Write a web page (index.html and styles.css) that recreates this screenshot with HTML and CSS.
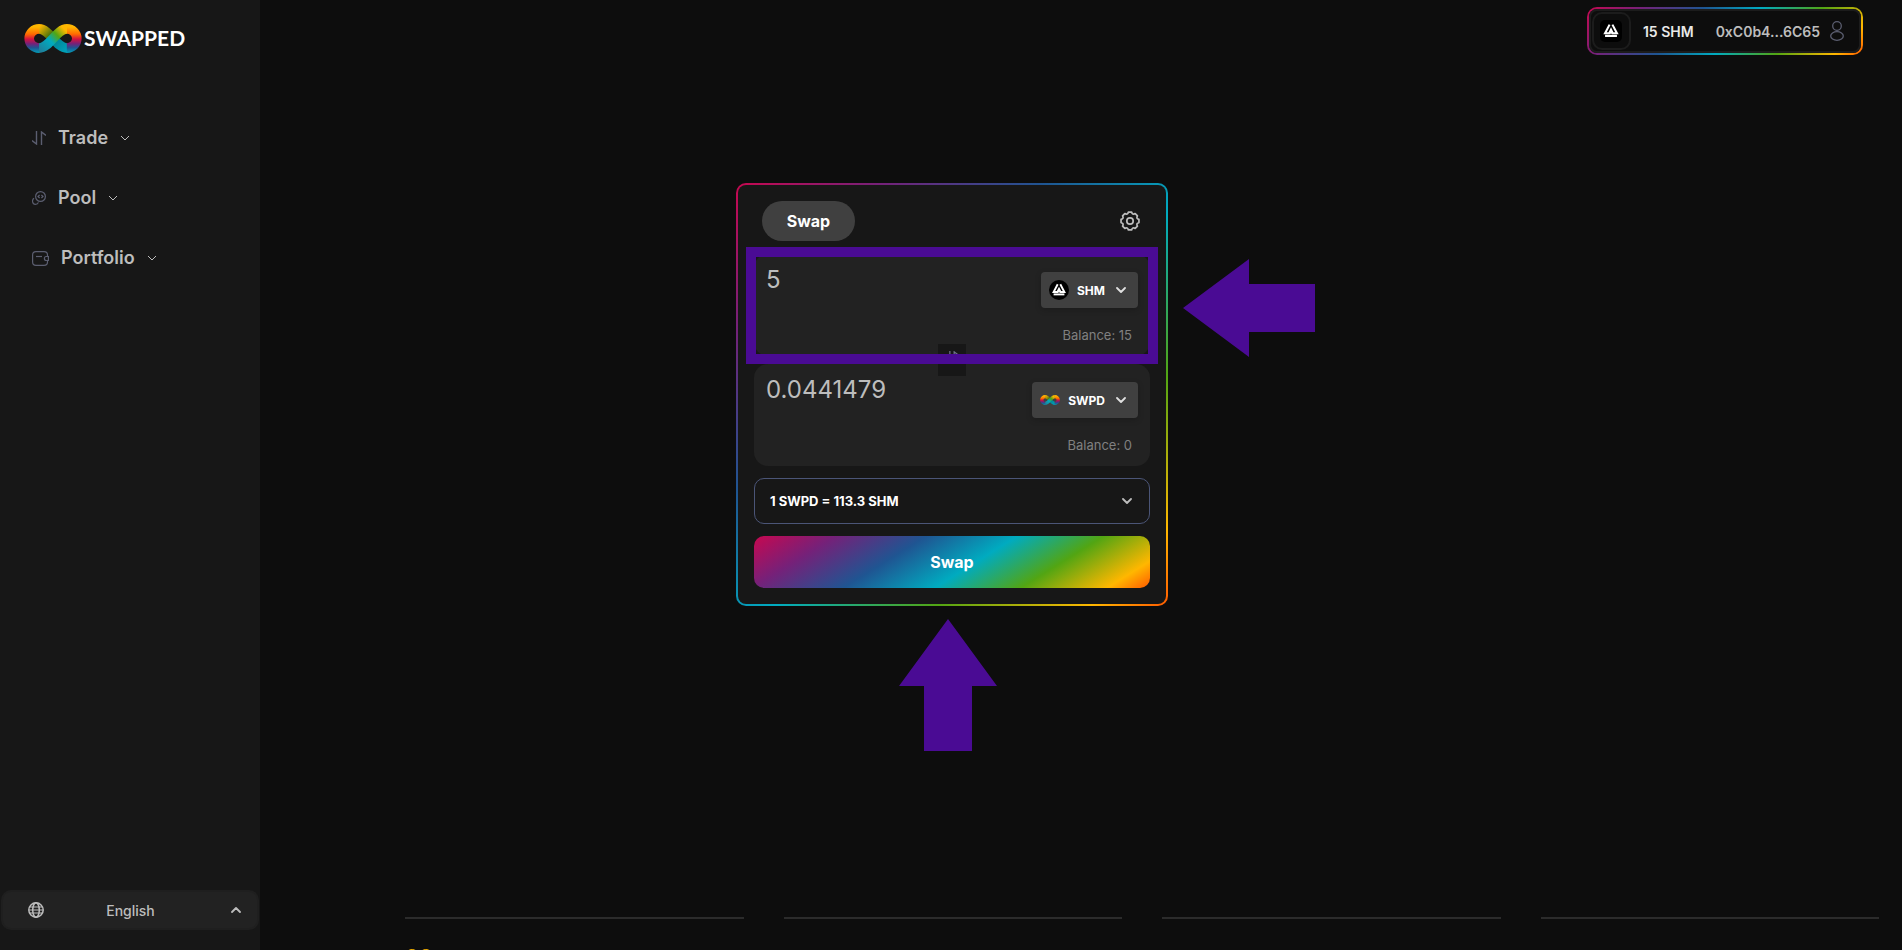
FILE: index.html
```html
<!DOCTYPE html>
<html lang="en">
<head>
  <meta charset="UTF-8" />
  <meta name="viewport" content="width=device-width, initial-scale=1.0" />
  <title>Swapped</title>
  <link rel="stylesheet" href="styles.css">
</head>
<body>
  <!-- shared symbols -->
  <svg class="sprite" aria-hidden="true">
    <defs>
      <linearGradient id="loop" gradientUnits="userSpaceOnUse" x1="0" y1="0" x2="0" y2="29">
        <stop offset="0.1" stop-color="#ffb700" />
        <stop offset="0.35" stop-color="#ff6a00" />
        <stop offset="0.52" stop-color="#d5123f" />
        <stop offset="0.68" stop-color="#752179" />
        <stop offset="0.82" stop-color="#1f5592" />
        <stop offset="1" stop-color="#00a0b8" />
      </linearGradient>
      <linearGradient id="band" gradientUnits="userSpaceOnUse" x1="42" y1="2" x2="16" y2="27">
        <stop offset="0.1" stop-color="#ffb700" />
        <stop offset="0.35" stop-color="#52a513" />
        <stop offset="0.6" stop-color="#00abc0" />
        <stop offset="1" stop-color="#1f7f9a" />
      </linearGradient>
      <linearGradient id="under" gradientUnits="userSpaceOnUse" x1="16" y1="2" x2="42" y2="27">
        <stop offset="0" stop-color="#ffb700" />
        <stop offset="0.4" stop-color="#3d6d0c" />
        <stop offset="0.65" stop-color="#00899b" />
        <stop offset="1" stop-color="#00a0b8" />
      </linearGradient>
      <symbol id="infinity" viewBox="0 0 58 29">
        <g fill="none" stroke-width="9.6">
          <path stroke="url(#under)" d="M15 4.9C26 4.9 32 24.1 43 24.1" />
          <path stroke="url(#loop)" d="M15.2 4.9A10 9.6 0 0 0 15.2 24.1" />
          <path stroke="url(#loop)" d="M42.8 4.9A10 9.6 0 0 1 42.8 24.1" />
          <path stroke="url(#band)" d="M15 24.1C26 24.1 32 4.9 43 4.9" />
        </g>
      </symbol>
      <symbol id="shm" viewBox="0 0 20 20">
        <rect width="20" height="20" rx="10" />
        <g fill="none" stroke="#fff" stroke-width="1.9">
          <path d="M8.7 4.2L4.6 12H8.4L10 8.8L11.6 12H15.4L11.3 4.2" />
          <path d="M4.6 14.4H15.4" />
          <path d="M10 10.6V12.6" />
        </g>
      </symbol>
      <symbol id="chevron" viewBox="0 0 10 6">
        <path d="M1 1L5 5L9 1" fill="none" stroke="currentColor" stroke-width="1.8" stroke-linejoin="round" stroke-linecap="round" />
      </symbol>
      <symbol id="chevron-thin" viewBox="0 0 10 6">
        <path d="M1 1L5 5L9 1" fill="none" stroke="currentColor" stroke-width="1" />
      </symbol>
      <symbol id="arrows" viewBox="0 0 14 14">
        <path d="M4.5 0V13L0 9.5M9.5 14V1L14 4.5" fill="none" stroke="currentColor" stroke-width="1.4" />
      </symbol>
    </defs>
  </svg>

  <div class="app">
    <aside class="sidebar">
      <a class="logo" href="#">
        <svg class="logo-mark"><use href="#infinity" /></svg>
        <span>SWAPPED</span>
      </a>

      <nav>
        <ul class="nav-menu">
          <li>
            <button type="button">
              <svg class="nav-icon" viewBox="0 0 14 14"><use href="#arrows" /></svg>
              Trade
              <svg class="nav-chevron"><use href="#chevron-thin" /></svg>
            </button>
          </li>
          <li>
            <button type="button">
              <svg class="nav-icon" viewBox="0 0 14 14">
                <g fill="none" stroke="currentColor" stroke-width="1.2">
                  <circle cx="8.5" cy="5.5" r="4.9" />
                  <path d="M2 7.2C-.4 9 .2 13.4 3.4 13.4C5 13.4 6 12.6 6.4 11.4" />
                  <path d="M7.6 4L6 5.5L7.6 7M9.4 4L11 5.5L9.4 7" />
                </g>
              </svg>
              Pool
              <svg class="nav-chevron"><use href="#chevron-thin" /></svg>
            </button>
          </li>
          <li>
            <button type="button">
              <svg class="nav-icon wide" viewBox="0 0 17 15">
                <g fill="none" stroke="currentColor" stroke-width="1.2">
                  <path d="M15.5 5V4C15.5 2 14 .6 12 .6H4C2 .6 .6 2 .6 4V11C.6 13 2 14.4 4 14.4H12C14 14.4 15.5 13 15.5 11V10" />
                  <path d="M16.4 5.5H14.2C11.8 5.5 11.8 9.5 14.2 9.5H16.4Z" />
                  <path d="M4 5.5H10" />
                </g>
              </svg>
              Portfolio
              <svg class="nav-chevron"><use href="#chevron-thin" /></svg>
            </button>
          </li>
        </ul>
      </nav>

      <button class="language" type="button">
        <svg class="globe" viewBox="0 0 16 16">
          <g fill="none" stroke="currentColor" stroke-width="1.5">
            <circle cx="8" cy="8" r="7.2" />
            <ellipse cx="8" cy="8" rx="3.3" ry="7.2" />
            <path d="M1 8H15M2 5H14M2 11H14" stroke-width="1.1" />
          </g>
        </svg>
        <span>English</span>
        <svg class="chevron up"><use href="#chevron" /></svg>
      </button>
    </aside>

    <main>
      <header class="topbar">
        <button class="wallet" type="button">
          <span class="wallet-token"><svg><use href="#shm" /></svg></span>
          <span class="wallet-balance">15 SHM</span>
          <span class="wallet-address">0xC0b4...6C65</span>
          <svg class="user" viewBox="0 0 14 20">
            <g fill="none" stroke="currentColor" stroke-width="1.3">
              <circle cx="7" cy="5" r="4.3" />
              <ellipse cx="7" cy="15" rx="6.3" ry="4.3" />
            </g>
          </svg>
        </button>
      </header>

      <section class="swap-area">
        <form class="swap-card">
          <div class="card-header">
            <button class="tab" type="button">Swap</button>
            <button class="settings" type="button" aria-label="Settings">
              <svg viewBox="0 0 20 20">
                <g fill="none" stroke="currentColor" stroke-width="1.7" stroke-linejoin="round">
                  <path d="M8.4 1.05H11.6Q12.4 4.2 15.2 2.55L17.45 4.8Q15.8 7.6 18.95 8.4V11.6Q15.8 12.4 17.45 15.2L15.2 17.45Q12.4 15.8 11.6 18.95H8.4Q7.6 15.8 4.8 17.45L2.55 15.2Q4.2 12.4 1.05 11.6V8.4Q4.2 7.6 2.55 4.8L4.8 2.55Q7.6 4.2 8.4 1.05Z" />
                  <circle cx="10" cy="10" r="3.2" />
                </g>
              </svg>
            </button>
          </div>

          <div class="panels">
            <div class="panel">
              <input type="text" value="5" aria-label="Amount to sell">
              <div class="panel-side">
                <button class="token" type="button">
                  <svg class="token-icon"><use href="#shm" /></svg>
                  SHM
                  <svg class="chevron"><use href="#chevron" /></svg>
                </button>
                <p>Balance: 15</p>
              </div>
              <button class="switch" type="button" aria-label="Switch tokens">
                <svg viewBox="0 0 14 14"><use href="#arrows" /></svg>
              </button>
              <div class="highlight"></div>
            </div>

            <div class="panel">
              <input type="text" value="0.0441479" aria-label="Amount to buy">
              <div class="panel-side">
                <button class="token" type="button">
                  <svg class="token-icon"><use href="#infinity" /></svg>
                  SWPD
                  <svg class="chevron"><use href="#chevron" /></svg>
                </button>
                <p>Balance: 0</p>
              </div>
            </div>
          </div>

          <button class="rate" type="button">
            1 SWPD = 113.3 SHM
            <svg class="chevron"><use href="#chevron" /></svg>
          </button>
          <button class="submit" type="submit">Swap</button>

          <svg class="pointer pointer-left" viewBox="0 0 132 98"><path d="M0 49L66 0V25H132V73H66V98Z" /></svg>
          <svg class="pointer pointer-up" viewBox="0 0 98 132"><path d="M49 0L98 67H73V132H25V67H0Z" /></svg>
        </form>
      </section>

      <footer class="footer">
        <div><svg><use href="#infinity" /></svg></div>
        <div></div>
        <div></div>
        <div></div>
      </footer>
    </main>
  </div>
</body>
</html>
```
FILE: styles.css
```css
* {
  margin: 0;
  padding: 0;
  box-sizing: border-box;
}

body {
  font-family: Inter, "Open Sans", sans-serif;
  background: #0d0d0d;
  color: #bdbdbd;
}

button,
input {
  font: inherit;
  color: inherit;
  background: none;
  border: none;
}

button {
  cursor: pointer;
}

svg {
  display: block;
  flex-shrink: 0;
}

.sprite {
  position: absolute;
  width: 0;
  height: 0;
}

.app {
  display: grid;
  grid-template-columns: 260px 1fr;
  height: 100vh;
  overflow: hidden;
}

/* sidebar */
.sidebar {
  display: flex;
  flex-direction: column;
  padding: 23px 1px 20px;
  background: #171717;
}

.logo {
  display: flex;
  align-items: center;
  gap: 2px;
  padding-left: 23px;
  font-family: Lato, sans-serif;
  font-size: 21px;
  font-weight: 700;
  line-height: 30px;
  color: #fff;
  text-decoration: none;
}

.logo-mark {
  width: 58px;
  height: 29px;
}

.nav-menu {
  display: flex;
  flex-direction: column;
  gap: 36px;
  margin-top: 73px;
  padding-left: 31px;
  list-style: none;
}

.nav-menu button {
  display: flex;
  align-items: center;
  gap: 12px;
  font-size: 18px;
  font-weight: 600;
  line-height: 24px;
}

.nav-icon {
  width: 14px;
  height: 14px;
  color: #5b5e70;
}

.nav-icon.wide {
  width: 17px;
  height: 15px;
}

.nav-chevron {
  width: 10px;
  height: 6px;
}

.language {
  display: grid;
  grid-template-columns: 1fr auto 1fr;
  align-items: center;
  height: 40px;
  margin-top: auto;
  padding: 0 16px 0 25px;
  border: 2px solid #1f1f1f;
  border-radius: 10px;
  background: #222;
  font-size: 14px;
  font-weight: 500;
}

.language span {
  padding-right: 8px;
}

.globe {
  width: 16px;
  height: 16px;
}

.chevron {
  width: 10px;
  height: 6px;
}

.chevron.up {
  justify-self: end;
  transform: rotate(180deg);
}

/* top bar */
main {
  display: flex;
  flex-direction: column;
  min-width: 0;
}

.topbar {
  display: flex;
  justify-content: flex-end;
  padding: 7px 39px 0 0;
}

.wallet {
  display: flex;
  align-items: center;
  height: 48px;
  padding: 0 17px 0 3px;
  border: 2px solid transparent;
  border-radius: 10px;
  background:
    linear-gradient(#0d0d0d, #0d0d0d) padding-box,
    linear-gradient(135deg, #c70850, #752179 17%, #1f5592 36%, #00abc0 54%, #52a513 73%, #ffb700 91%, #ff5a00) border-box;
  box-shadow: inset 0 0 0 2px #1c1c1c;
  font-size: 14px;
}

.wallet-token {
  display: grid;
  place-items: center;
  width: 39px;
  height: 38px;
  border: 2px solid #1c1c1c;
  border-radius: 10px;
}

.wallet-token svg {
  width: 22px;
  height: 22px;
  border-radius: 5px;
  background: #000;
}

.wallet-balance {
  margin-left: 12px;
  font-weight: 600;
  color: #e8e8e8;
}

.wallet-address {
  margin-left: 22px;
  font-weight: 600;
}

.user {
  width: 14px;
  height: 20px;
  margin-left: 10px;
  color: #5b5e70;
}

/* swap card */
.swap-area {
  display: flex;
  justify-content: center;
  margin-top: 128px;
  padding-right: 258px;
}

.swap-card {
  position: relative;
  display: flex;
  flex-direction: column;
  gap: 12px;
  width: 432px;
  padding: 16px;
  border: 2px solid transparent;
  border-radius: 10px;
  background:
    linear-gradient(#171717, #171717) padding-box,
    linear-gradient(135deg, #c70850, #752179 17%, #1f5592 36%, #00abc0 54%, #52a513 73%, #ffb700 91%, #ff5a00) border-box;
}

.card-header {
  display: flex;
  align-items: center;
  justify-content: space-between;
  padding: 0 10px 1px 8px;
}

.tab {
  width: 93px;
  height: 40px;
  border-radius: 20px;
  background: #404040;
  font-size: 16px;
  font-weight: 700;
  color: #fff;
}

.settings svg {
  width: 20px;
  height: 20px;
}

.panels {
  display: flex;
  flex-direction: column;
  gap: 8px;
}

.panel {
  position: relative;
  display: flex;
  align-items: flex-start;
  justify-content: space-between;
  padding: 10px 12px;
  border-radius: 14px;
  background: #222;
}

.panel input {
  flex: 1;
  min-width: 0;
  font-size: 24px;
  line-height: 32px;
}

.panel-side {
  display: flex;
  flex-direction: column;
  align-items: flex-end;
  gap: 16px;
  padding-top: 8px;
}

.panel-side p {
  padding-right: 6px;
  font-size: 13px;
  line-height: 22px;
  color: #808080;
}

.token {
  display: flex;
  align-items: center;
  gap: 8px;
  height: 36px;
  padding: 0 12px 0 8px;
  border-radius: 4px;
  background: #404040;
  box-shadow: 0 2px 6px rgba(0, 0, 0, 0.2);
  font-size: 12px;
  font-weight: 700;
  color: #fff;
}

.token .chevron {
  margin-left: 3px;
  color: #e0e0e0;
}

.token-icon {
  width: 20px;
  height: 20px;
}

.switch {
  position: absolute;
  bottom: -20px;
  left: calc(50% - 14px);
  display: flex;
  justify-content: center;
  width: 28px;
  height: 32px;
  padding-top: 6px;
  background: #171717;
  color: #70748a;
  z-index: 1;
}

.switch svg {
  width: 12px;
  height: 14px;
}

.highlight {
  position: absolute;
  inset: -7px -8px -8px;
  border: 10px solid #4a0b94;
  pointer-events: none;
  z-index: 2;
}

.rate {
  display: flex;
  align-items: center;
  justify-content: space-between;
  height: 46px;
  padding: 0 17px 0 15px;
  border: 1px solid #4b5577;
  border-radius: 10px;
  font-size: 13px;
  font-weight: 700;
  color: #fff;
}

.rate .chevron {
  color: #bdbdbd;
}

.submit {
  height: 52px;
  border-radius: 10px;
  background: linear-gradient(148deg, #c70850, #752179 17%, #1f5592 36%, #00abc0 55%, #52a513 73%, #ffb700 91%, #ff5a00);
  font-size: 16px;
  font-weight: 700;
  color: #fff;
}

.pointer {
  position: absolute;
  fill: #4a0b94;
}

.pointer-left {
  top: 74px;
  left: calc(100% + 17px);
  width: 132px;
  height: 98px;
}

.pointer-up {
  top: calc(100% + 15px);
  left: 161px;
  width: 98px;
  height: 132px;
}

/* footer */
.footer {
  display: grid;
  grid-template-columns: repeat(4, 1fr);
  gap: 40px;
  height: 33px;
  margin-top: auto;
  padding: 0 23px 0 145px;
  overflow: hidden;
}

.footer div {
  padding-top: 30px;
  border-top: 2px solid #2b2b2b;
}

.footer svg {
  width: 28px;
  height: 14px;
}
```
